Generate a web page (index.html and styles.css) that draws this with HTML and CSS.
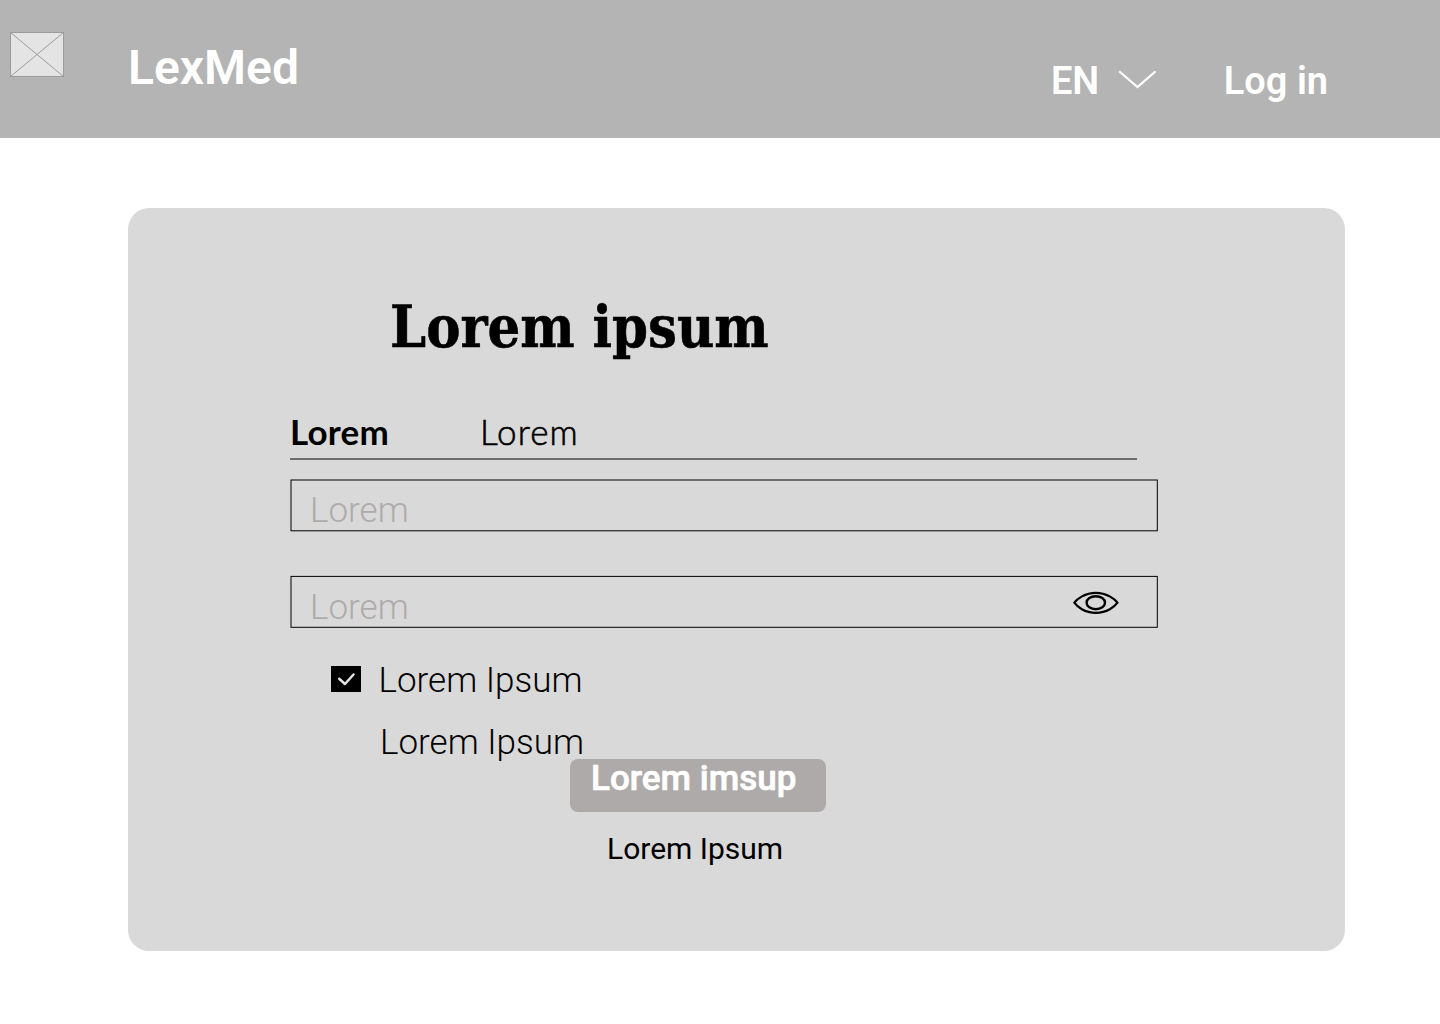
FILE: index.html
```html
<!DOCTYPE html>
<html lang="en">
<head>
<meta charset="utf-8">
<title>LexMed</title>
<link rel="stylesheet" href="styles.css">
</head>
<body>
<header class="header">
  <svg class="logo" viewBox="0 0 54 45"><rect x=".5" y=".5" width="53" height="44" fill="#e4e4e4" stroke="#9b9b9b"/><path d="M.5 .5L53.5 44.5M53.5 .5L.5 44.5" stroke="#9b9b9b"/></svg>
  <div class="brand">LexMed</div>
  <nav class="nav">
    <span class="lang">EN</span>
    <svg class="chevron" viewBox="0 0 38 20"><path d="M2 2L19.5 17L36.8 2" fill="none" stroke="#fff" stroke-width="2.3" stroke-linecap="round"/></svg>
    <span class="login">Log in</span>
  </nav>
</header>
<main class="card">
  <h1 class="title"><span class="title-text">Lorem ipsum</span></h1>
  <div class="tabs"><span class="tab tab-active">Lorem</span><span class="tab">Lorem</span></div>
  <div class="field">
    <svg class="outline" viewBox="0 0 869 53"><rect x="1" y="1" width="866.3" height="50.8" fill="none" stroke="#000"/></svg>
    <span class="placeholder">Lorem</span>
  </div>
  <div class="field field-password">
    <svg class="outline" viewBox="0 0 869 53"><rect x="1" y="1.4" width="866.3" height="50.9" fill="none" stroke="#000"/></svg>
    <span class="placeholder">Lorem</span>
    <svg class="eye" viewBox="0 0 46 24"><g fill="none" stroke="#000" stroke-width="2.2" stroke-linejoin="round"><path d="M1.3 11.7C4 8 12 1.8 22.8 1.8S41.8 8 44.5 11.7C41.8 15.5 34 21.8 22.8 21.8S4 15.5 1.3 11.7Z"/><ellipse cx="22.8" cy="11.7" rx="9.2" ry="6.5" stroke-width="2.4"/></g></svg>
  </div>
  <div class="check-row">
    <svg class="checkbox" viewBox="0 0 30 26"><path d="M0 0H30V26H0Z"/><path d="M8.2 12.8L14 18L22.5 8.5" fill="none" stroke="#e4e4e4" stroke-width="2.5" stroke-linecap="round" stroke-linejoin="round"/></svg>
    <span>Lorem Ipsum</span>
  </div>
  <div class="note">Lorem Ipsum</div>
  <div class="button">Lorem imsup</div>
  <div class="link">Lorem Ipsum</div>
</main>
</body>
</html>
```
FILE: styles.css
```css
* { box-sizing: border-box; }
body { margin: 0; background: #fff; color: #000; font-family: Roboto, sans-serif; }
svg { display: block; flex: none; }
.header { display: flex; align-items: flex-start; height: 138px; background: #b4b4b4; color: #fff; font-weight: 600; }
.logo { width: 54px; height: 45px; margin: 32px 0 0 10px; }
.brand { margin: 40px 0 0 64px; font-size: 48px; line-height: 56px; }
.nav { display: flex; align-items: flex-start; margin: 59px 112px 0 auto; font-size: 38px; line-height: 44px; }
.chevron { width: 38px; height: 20px; margin: 11px 67.6px 0 19px; }
.card { width: 1217px; height: 743px; margin: 70px 0 0 128px; padding: 84px 0 0 162px; border-radius: 21px; background: #d9d9d9; }
.title { margin: 0 0 0 100px; height: 70px; font: bold 57px/70px "DejaVu Serif", serif; }
.title-text { display: inline-block; transform-origin: left; transform: scaleX(.902); white-space: nowrap; -webkit-text-stroke: .6px #000; }
.tabs { display: flex; gap: 90px; width: 847px; height: 49px; margin-top: 49px; border-bottom: 2px solid #6d6d6d; font: 300 35px/40px Lato, sans-serif; }
.tab { letter-spacing: 1.1px; -webkit-text-stroke: .6px #000; }
.tab-active { width: 100px; font-weight: 700; letter-spacing: .2px; -webkit-text-stroke: 0; }
.field { display: flex; width: 869px; height: 53px; margin-top: 19px; }
.outline { width: 869px; height: 53px; margin-right: -869px; }
.placeholder { margin: 11px 0 0 20px; font-size: 35px; line-height: 41px; font-weight: 300; color: #afabab; }
.field-password { margin-top: 43px; }
.field-password .placeholder { margin-top: 12px; }
.eye { width: 46px; height: 24px; margin: 16px 40px 0 auto; }
.check-row { display: flex; margin: 32px 0 0 41px; font-size: 35px; line-height: 42px; font-weight: 300; }
.checkbox { width: 30px; height: 26px; margin: 6px 17.5px 0 0; }
.note { margin: 20px 0 0 90px; font-size: 35px; line-height: 42px; font-weight: 300; }
.button { width: 256px; height: 53px; margin: -5px 0 0 280px; padding-left: 21px; border-radius: 8px; background: #aeaaa9; color: #fff; font-size: 35px; line-height: 40px; font-weight: 500; -webkit-text-stroke: .7px #fff; }
.link { margin: 19px 0 0 317px; font-size: 30px; line-height: 36px; }
```
